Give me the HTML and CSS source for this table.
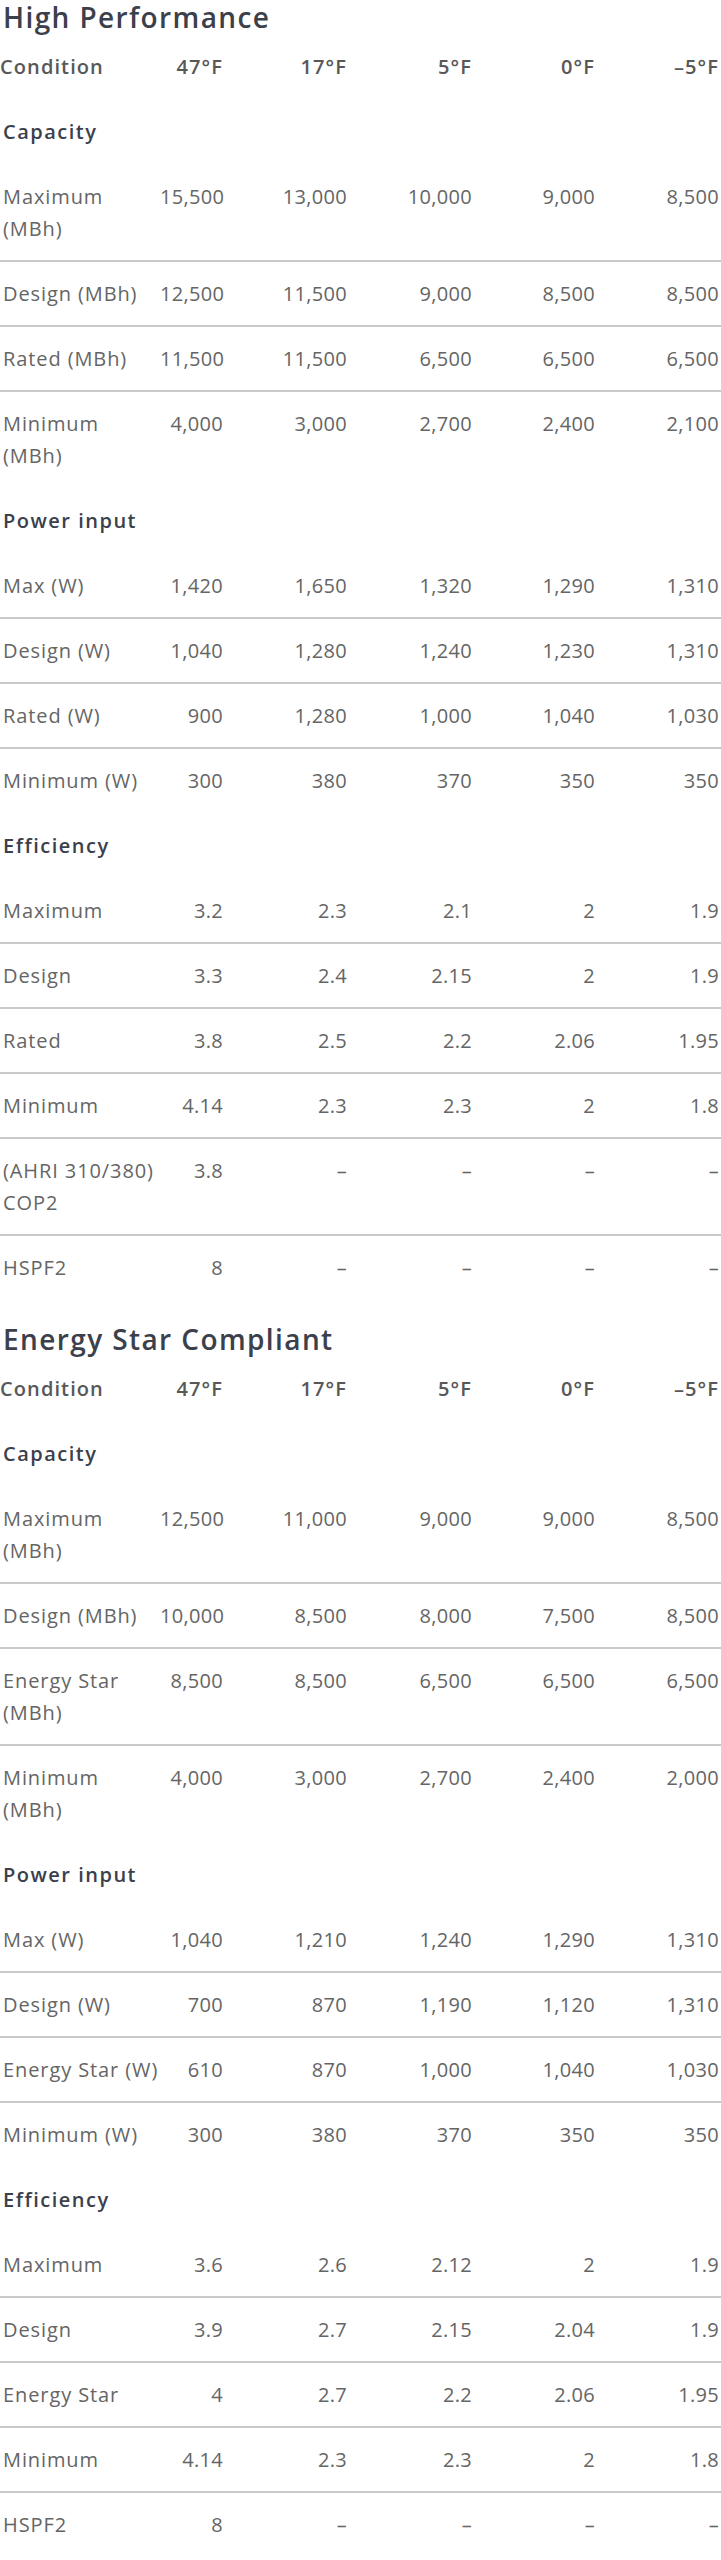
FILE: index.html
```html
<!DOCTYPE html>
<html lang="en">
<head>
<meta charset="utf-8">
<title>Performance tables</title>
<link rel="stylesheet" href="styles.css">
</head>
<body>
<section class="spec">
  <h2 class="spec-title">High Performance</h2>
  <table class="spec-table">
    <colgroup>
      <col class="c-label"><col class="c-47"><col class="c-17"><col class="c-5"><col class="c-0"><col class="c-m5">
    </colgroup>
    <thead>
      <tr class="head"><th>Condition</th><th>47°F</th><th>17°F</th><th>5°F</th><th>0°F</th><th>–5°F</th></tr>
    </thead>
    <tbody>
      <tr class="group"><td colspan="6">Capacity</td></tr>
      <tr><td>Maximum<br>(MBh)</td><td>15,500</td><td>13,000</td><td>10,000</td><td>9,000</td><td>8,500</td></tr>
      <tr><td>Design (MBh)</td><td>12,500</td><td>11,500</td><td>9,000</td><td>8,500</td><td>8,500</td></tr>
      <tr><td>Rated (MBh)</td><td>11,500</td><td>11,500</td><td>6,500</td><td>6,500</td><td>6,500</td></tr>
      <tr class="last"><td>Minimum<br>(MBh)</td><td>4,000</td><td>3,000</td><td>2,700</td><td>2,400</td><td>2,100</td></tr>
      <tr class="group"><td colspan="6">Power input</td></tr>
      <tr><td>Max (W)</td><td>1,420</td><td>1,650</td><td>1,320</td><td>1,290</td><td>1,310</td></tr>
      <tr><td>Design (W)</td><td>1,040</td><td>1,280</td><td>1,240</td><td>1,230</td><td>1,310</td></tr>
      <tr><td>Rated (W)</td><td>900</td><td>1,280</td><td>1,000</td><td>1,040</td><td>1,030</td></tr>
      <tr class="last"><td>Minimum (W)</td><td>300</td><td>380</td><td>370</td><td>350</td><td>350</td></tr>
      <tr class="group"><td colspan="6">Efficiency</td></tr>
      <tr><td>Maximum</td><td>3.2</td><td>2.3</td><td>2.1</td><td>2</td><td>1.9</td></tr>
      <tr><td>Design</td><td>3.3</td><td>2.4</td><td>2.15</td><td>2</td><td>1.9</td></tr>
      <tr><td>Rated</td><td>3.8</td><td>2.5</td><td>2.2</td><td>2.06</td><td>1.95</td></tr>
      <tr><td>Minimum</td><td>4.14</td><td>2.3</td><td>2.3</td><td>2</td><td>1.8</td></tr>
      <tr><td>(AHRI 310/380)<br>COP2</td><td>3.8</td><td>–</td><td>–</td><td>–</td><td>–</td></tr>
      <tr class="last"><td>HSPF2</td><td>8</td><td>–</td><td>–</td><td>–</td><td>–</td></tr>
    </tbody>
  </table>
</section>

<section class="spec">
  <h2 class="spec-title">Energy Star Compliant</h2>
  <table class="spec-table">
    <colgroup>
      <col class="c-label"><col class="c-47"><col class="c-17"><col class="c-5"><col class="c-0"><col class="c-m5">
    </colgroup>
    <thead>
      <tr class="head"><th>Condition</th><th>47°F</th><th>17°F</th><th>5°F</th><th>0°F</th><th>–5°F</th></tr>
    </thead>
    <tbody>
      <tr class="group"><td colspan="6">Capacity</td></tr>
      <tr><td>Maximum<br>(MBh)</td><td>12,500</td><td>11,000</td><td>9,000</td><td>9,000</td><td>8,500</td></tr>
      <tr><td>Design (MBh)</td><td>10,000</td><td>8,500</td><td>8,000</td><td>7,500</td><td>8,500</td></tr>
      <tr><td>Energy Star<br>(MBh)</td><td>8,500</td><td>8,500</td><td>6,500</td><td>6,500</td><td>6,500</td></tr>
      <tr class="last"><td>Minimum<br>(MBh)</td><td>4,000</td><td>3,000</td><td>2,700</td><td>2,400</td><td>2,000</td></tr>
      <tr class="group"><td colspan="6">Power input</td></tr>
      <tr><td>Max (W)</td><td>1,040</td><td>1,210</td><td>1,240</td><td>1,290</td><td>1,310</td></tr>
      <tr><td>Design (W)</td><td>700</td><td>870</td><td>1,190</td><td>1,120</td><td>1,310</td></tr>
      <tr><td>Energy Star (W)</td><td>610</td><td>870</td><td>1,000</td><td>1,040</td><td>1,030</td></tr>
      <tr class="last"><td>Minimum (W)</td><td>300</td><td>380</td><td>370</td><td>350</td><td>350</td></tr>
      <tr class="group"><td colspan="6">Efficiency</td></tr>
      <tr><td>Maximum</td><td>3.6</td><td>2.6</td><td>2.12</td><td>2</td><td>1.9</td></tr>
      <tr><td>Design</td><td>3.9</td><td>2.7</td><td>2.15</td><td>2.04</td><td>1.9</td></tr>
      <tr><td>Energy Star</td><td>4</td><td>2.7</td><td>2.2</td><td>2.06</td><td>1.95</td></tr>
      <tr><td>Minimum</td><td>4.14</td><td>2.3</td><td>2.3</td><td>2</td><td>1.8</td></tr>
      <tr class="last"><td>HSPF2</td><td>8</td><td>–</td><td>–</td><td>–</td><td>–</td></tr>
    </tbody>
  </table>
</section>
</body>
</html>
```

FILE: styles.css
```css
html, body {
  margin: 0;
  padding: 0;
  background: #ffffff;
}

body {
  width: 721px;
  font-family: "Open Sans", "Noto Sans", sans-serif;
  color: #656565;
}

.spec + .spec {
  margin-top: 21px;
}

.spec-title {
  margin: 0;
  padding-left: 3px;
  font-size: 28px;
  line-height: 35px;
  font-weight: 600;
  color: #3b404b;
  letter-spacing: 1.4px;
}

.spec-table {
  width: 721px;
  border-collapse: collapse;
  table-layout: fixed;
}

.c-label { width: 160px; }
.c-47 { width: 63px; }
.c-17 { width: 124px; }
.c-5 { width: 125px; }
.c-0 { width: 123px; }
.c-m5 { width: 126px; }

.spec-table th,
.spec-table td {
  padding: 16px 0 15px 0;
  font-size: 20px;
  line-height: 32px;
  text-align: right;
  white-space: nowrap;
  letter-spacing: 0.3px;
  vertical-align: top;
}

.spec-table th:first-child,
.spec-table td:first-child {
  text-align: left;
  padding-left: 3px;
  letter-spacing: 0.9px;
}

.spec-table th:last-child,
.spec-table td:last-child {
  padding-right: 2px;
}

.spec-table tbody tr {
  border-bottom: 2px solid #c9c9c9;
}

.spec-table tbody tr.group,
.spec-table tbody tr.last {
  border-bottom-color: transparent;
}

.spec-table thead th {
  font-weight: 600;
  color: #585858;
  letter-spacing: 1.1px;
  border-bottom: 2px solid transparent;
}

.spec-table thead th:first-child {
  padding-left: 0;
  letter-spacing: 1.1px;
}

.spec-table tr.group td {
  text-align: left;
  font-weight: 600;
  color: #3b404b;
  letter-spacing: 1.5px;
}
```
